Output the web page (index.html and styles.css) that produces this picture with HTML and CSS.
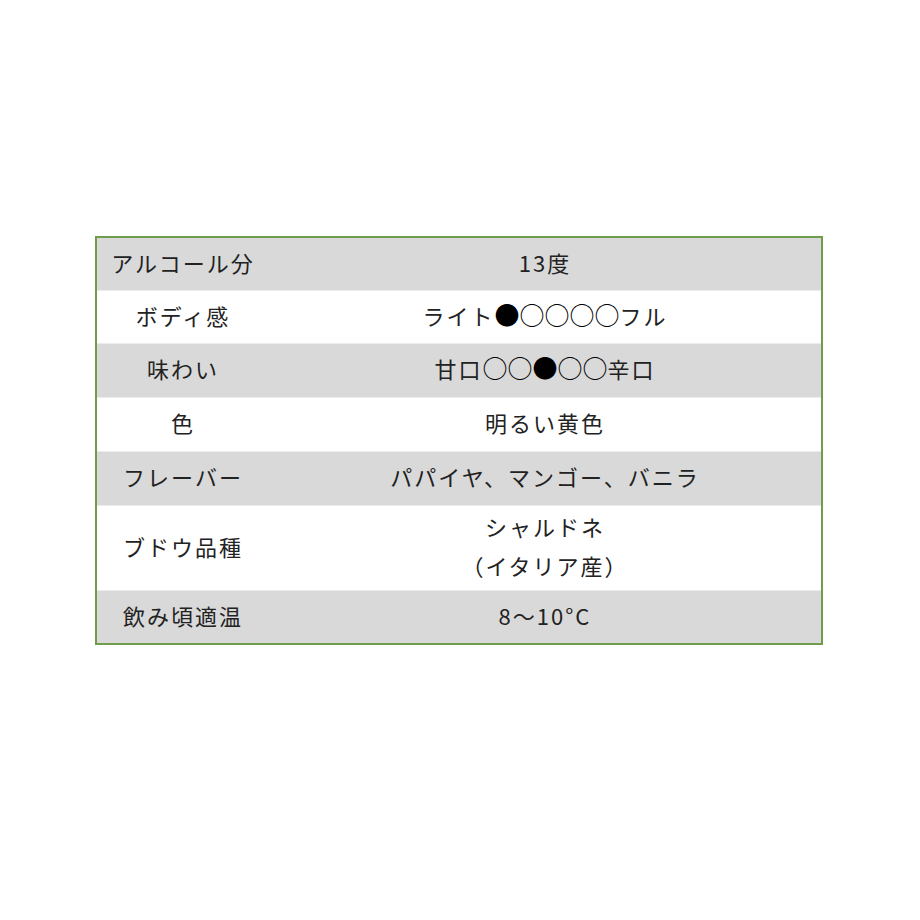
FILE: index.html
```html
<!DOCTYPE html>
<html lang="ja">
<head>
<meta charset="utf-8">
<link rel="stylesheet" href="styles.css">
</head>
<body>
<div class="page">
  <table class="spec">
    <tr class="gray short"><td class="label">アルコール分</td><td class="value">13度</td></tr>
    <tr class="short"><td class="label">ボディ感</td><td class="value">ライト<span class="dots">●○○○○</span>フル</td></tr>
    <tr class="gray"><td class="label">味わい</td><td class="value">甘口<span class="dots">○○●○○</span>辛口</td></tr>
    <tr><td class="label">色</td><td class="value">明るい黄色</td></tr>
    <tr class="gray"><td class="label">フレーバー</td><td class="value">パパイヤ、マンゴー、バニラ</td></tr>
    <tr class="tall"><td class="label">ブドウ品種</td><td class="value two">シャルドネ<br>（イタリア産）</td></tr>
    <tr class="gray"><td class="label">飲み頃適温</td><td class="value">8～10°C</td></tr>
  </table>
</div>
</body>
</html>
```
FILE: styles.css
```css
html, body {
  margin: 0;
  padding: 0;
  background: #ffffff;
}
.page {
  padding: 236px 0 0 95px;
}
.spec {
  width: 728px;
  border-collapse: collapse;
  border: 2px solid #6f9d4b;
  font-family: "Noto Sans CJK JP", "Noto Sans", sans-serif;
  font-size: 22px;
  letter-spacing: 2px;
  color: #222222;
}
.spec tr {
  height: 54px;
}
.spec tr.short {
  height: 53px;
}
.spec tr.tall {
  height: 85px;
}
.spec tr.gray td {
  background: #d9d9d9;
}
.spec td {
  padding: 0 0 4px 0;
  text-align: center;
  vertical-align: middle;
  border-top: 1px solid #ececec;
  line-height: 30px;
}
.spec td.label {
  width: 172px;
}
.spec td.two {
  line-height: 39px;
}
.dots {
  font-size: 25px;
  letter-spacing: 0;
  line-height: 20px;
  color: #000000;
}
```
